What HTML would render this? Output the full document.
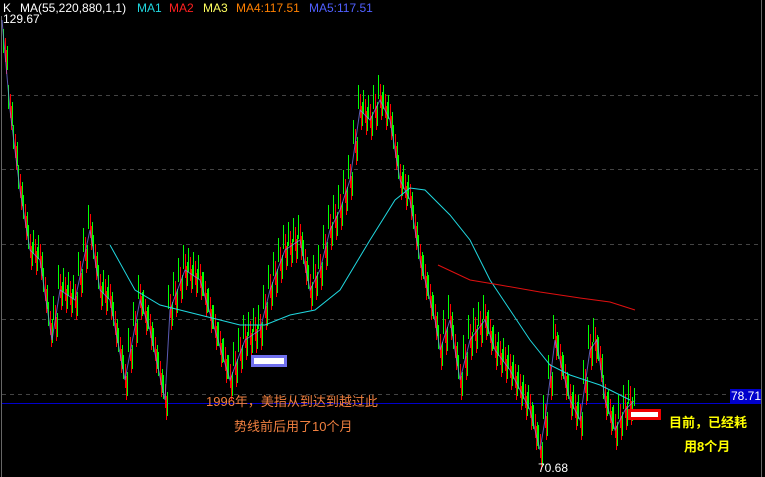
<!DOCTYPE html>
<html><head><meta charset="utf-8"><style>
html,body{margin:0;padding:0;background:#000;width:765px;height:477px;overflow:hidden}
#c{position:absolute;left:0;top:0}
.t{position:absolute;font-family:"Liberation Sans","Noto Sans CJK SC",sans-serif;font-size:12px;white-space:nowrap}
</style></head><body>
<svg id="c" width="765" height="477" xmlns="http://www.w3.org/2000/svg">
<defs>
<path id="bp" fill="none" d="M5.5 38V62 M10.5 94V118 M15.5 134V158 M20.5 174V198 M25.5 204V228 M30.5 234V258 M35.5 239V263 M40.5 244V268 M45.5 277V301 M50.5 311V335 M55.5 305V329 M60.5 274V298 M65.5 277V301 M70.5 281V305 M75.5 284V308 M80.5 261V285 M85.5 237V261 M90.5 214V238 M95.5 244V268 M100.5 274V298 M105.5 279V303 M110.5 284V308 M115.5 311V335 M120.5 337V361 M125.5 364V388 M130.5 337V361 M135.5 311V335 M140.5 284V308 M145.5 299V323 M150.5 314V338 M155.5 337V361 M160.5 361V385 M165.5 384V408 M170.5 294V318 M175.5 281V305 M180.5 267V291 M185.5 254V278 M190.5 257V281 M195.5 261V285 M200.5 264V288 M205.5 281V305 M210.5 297V321 M215.5 314V338 M220.5 331V355 M225.5 347V371 M230.5 364V388 M235.5 351V375 M240.5 337V361 M245.5 324V348 M250.5 321V345 M255.5 317V341 M260.5 314V338 M265.5 294V318 M270.5 274V298 M275.5 261V285 M280.5 247V271 M285.5 234V258 M290.5 231V255 M295.5 227V251 M300.5 224V248 M305.5 249V273 M310.5 274V298 M315.5 264V288 M320.5 254V278 M325.5 234V258 M330.5 214V238 M335.5 204V228 M340.5 194V218 M345.5 179V203 M350.5 164V188 M355.5 129V153 M360.5 94V118 M365.5 99V123 M370.5 104V128 M375.5 94V118 M380.5 84V108 M385.5 94V118 M390.5 104V128 M395.5 134V158 M400.5 164V188 M405.5 174V198 M410.5 184V208 M415.5 214V238 M420.5 244V268 M425.5 264V288 M430.5 284V308 M435.5 304V328 M440.5 334V358 M445.5 319V343 M450.5 304V328 M455.5 334V358 M460.5 364V388 M465.5 344V368 M470.5 324V348 M475.5 317V341 M480.5 311V335 M485.5 304V328 M490.5 319V343 M495.5 334V358 M500.5 341V365 M505.5 347V371 M510.5 354V378 M515.5 364V388 M520.5 374V398 M525.5 384V408 M530.5 394V418 M535.5 414V438 M540.5 434V458 M545.5 404V428 M550.5 364V388 M555.5 324V348 M560.5 344V368 M565.5 364V388 M570.5 384V408 M575.5 394V418 M580.5 404V428 M585.5 369V393 M590.5 334V358 M595.5 327V351 M600.5 346V370 M605.5 384V408 M610.5 399V423 M615.5 414V438 M620.5 404V428 M625.5 394V418 M630.5 389V413"/>
</defs>
<rect width="765" height="477" fill="#000"/>
<line x1="1.5" y1="16" x2="1.5" y2="477" stroke="#666"/>
<line x1="761.5" y1="0" x2="761.5" y2="477" stroke="#666"/>
<g stroke="#444" stroke-dasharray="4,4">
<line x1="2" y1="95.5" x2="761" y2="95.5"/><line x1="2" y1="169.5" x2="761" y2="169.5"/>
<line x1="2" y1="244.5" x2="761" y2="244.5"/><line x1="2" y1="319.5" x2="761" y2="319.5"/>
<line x1="2" y1="394.5" x2="761" y2="394.5"/>
</g>
<line x1="2" y1="403.5" x2="761" y2="403.5" stroke="#0000cc"/>
<use href="#bp" stroke="#ff0000"/>
<use href="#bp" stroke="#00ff00" transform="translate(2,8)"/>
<use href="#bp" stroke="#00ff00" transform="translate(-2,-9)"/>
<use href="#bp" stroke="#ff0000" transform="translate(1,12)"/>
<polyline fill="none" stroke="#8080ff" stroke-opacity="0.7" points="2,20 10,110 20,190 30,250 40,260 52,340 60,290 75,300 90,230 100,290 110,300 125,380 140,300 150,330 165,400 170,310 185,270 200,280 215,330 230,380 245,340 260,330 270,290 285,250 300,240 310,290 320,270 330,230 340,210 350,180 360,110 370,120 380,100 390,120 400,180 410,200 420,260 435,320 440,350 450,320 460,380 470,340 485,320 495,350 510,370 520,390 530,410 540,450 545,420 550,380 555,340 560,360 570,400 580,420 590,350 597,340 605,400 615,430 625,410 635,400"/>
<line x1="634.5" y1="388" x2="634.5" y2="406" stroke="#00ff00"/>
<line x1="630.5" y1="386" x2="630.5" y2="404" stroke="#ff0000"/>
<polyline fill="none" stroke="#20d8e0" points="110,245 135,290 160,305 200,315 240,325 265,325 290,315 315,310 340,290 370,240 395,200 410,188 425,190 450,215 470,240 490,280 510,310 530,340 550,365 570,375 600,385 630,400"/>
<polyline fill="none" stroke="#e01010" points="438,265 470,280 500,285 540,292 580,298 610,302 635,310"/>
<rect x="252.5" y="356.5" width="33" height="9" fill="#fff" stroke="#7070ee" stroke-width="3"/>
<rect x="629.5" y="410.5" width="30" height="8" fill="#fff" stroke="#ee0000" stroke-width="3"/>
<rect x="730" y="389" width="31" height="14" fill="#0000cc"/>
</svg>
<div class="t" style="left:3px;top:1px;color:#fff">K</div>
<div class="t" style="left:20px;top:1px;color:#fff">MA(55,220,880,1,1)</div>
<div class="t" style="left:137px;top:1px;color:#20d8e0">MA1</div>
<div class="t" style="left:169px;top:1px;color:#ff2020">MA2</div>
<div class="t" style="left:203px;top:1px;color:#ffff60">MA3</div>
<div class="t" style="left:236px;top:1px;color:#ff8000">MA4:117.51</div>
<div class="t" style="left:309px;top:1px;color:#5060ff">MA5:117.51</div>
<div class="t" style="left:3px;top:12px;color:#fff">129.67</div>
<div class="t" style="left:731px;top:389px;color:#fff">78.71</div>
<div class="t" style="left:538px;top:461px;color:#fff">70.68</div>
<div class="t" style="left:206px;top:391px;color:#f08040;font-size:13px">1996年，美指从到达到越过此</div>
<div class="t" style="left:234px;top:416px;color:#f08040;font-size:13px">势线前后用了10个月</div>
<div class="t" style="left:669px;top:412px;color:#ffff00;font-size:13px;font-weight:bold">目前，已经耗</div>
<div class="t" style="left:684px;top:436px;color:#ffff00;font-size:13px;font-weight:bold">用8个月</div>
</body></html>
